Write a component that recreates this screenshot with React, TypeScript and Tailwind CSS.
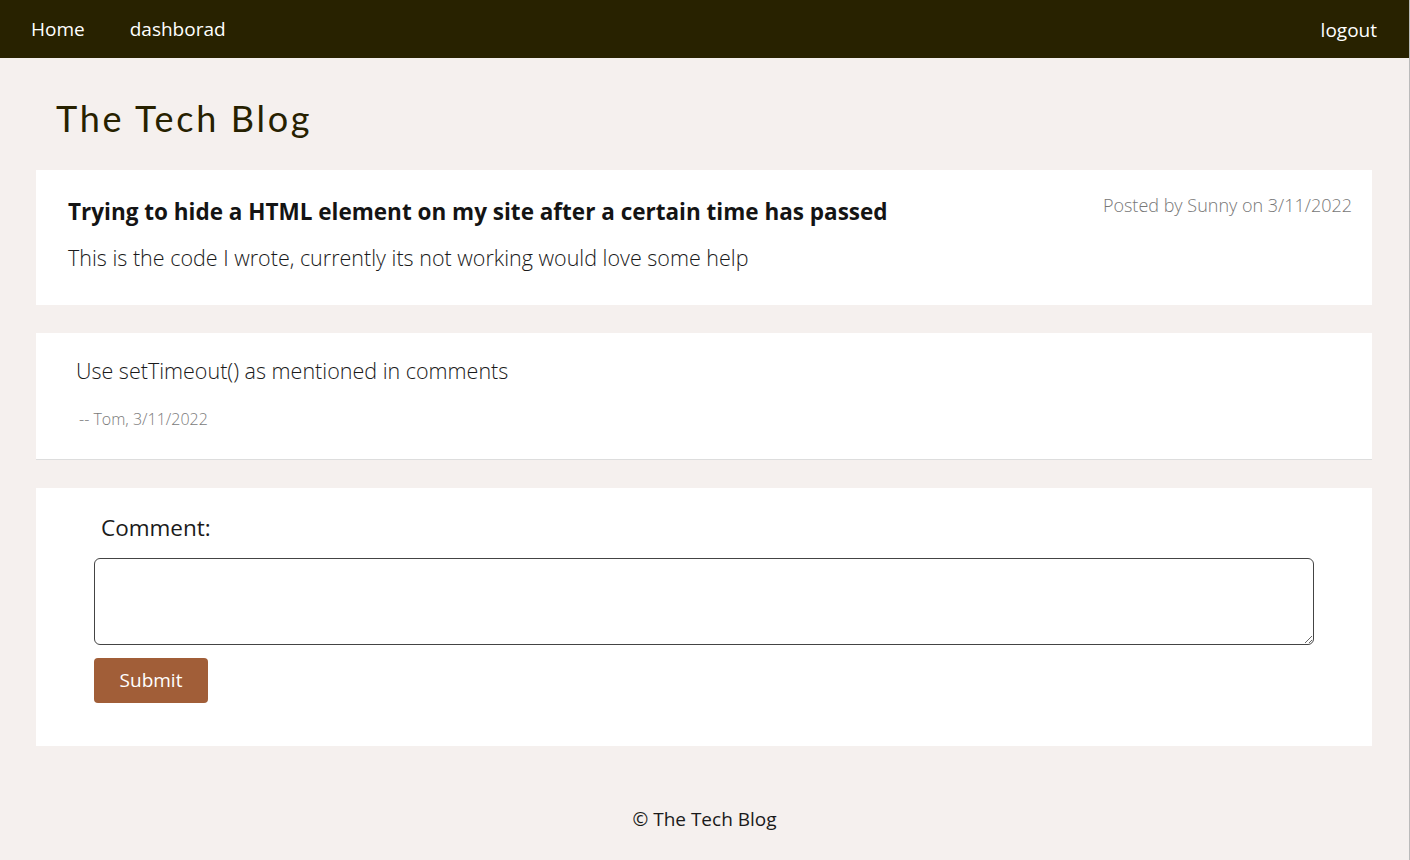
import React from 'react';

const font = { fontFamily: '"Open Sans", "Noto Sans", sans-serif' };

function NavBar() {
  return (
    <nav className="flex h-[58px] items-center justify-between bg-[#282200] pl-[31px] pr-[32px] text-[19px] text-white">
      <div className="flex items-center gap-[45px]">
        <a className="cursor-pointer">Home</a>
        <a className="cursor-pointer">dashborad</a>
      </div>
      <a className="cursor-pointer pt-[2px]">logout</a>
    </nav>
  );
}

function PostCard() {
  return (
    <section className="bg-white pb-[31px] pl-[32px] pr-[20px] pt-[25px]">
      <div className="flex items-start justify-between">
        <h2 className="text-[22.5px] font-bold text-[#141414]">
          Trying to hide a HTML element on my site after a certain time has passed
        </h2>
        <span className="mt-[-3px] text-[18px] font-light text-[#777]">Posted by Sunny on 3/11/2022</span>
      </div>
      <p className="mt-[13px] text-[21.5px] font-light text-[#1a1a1a]">
        This is the code I wrote, currently its not working would love some help
      </p>
    </section>
  );
}

function CommentItem() {
  return (
    <section className="border-b border-[#dddddd] bg-white pb-[28px] pl-[40px] pt-[22px]">
      <p className="text-[21.5px] font-light text-[#1a1a1a]">Use setTimeout() as mentioned in comments</p>
      <p className="mt-[20px] pl-[3px] text-[16px] font-light text-[#7a7a7a]">-- Tom, 3/11/2022</p>
    </section>
  );
}

function CommentForm() {
  return (
    <form className="bg-white pb-[43px] pl-[58px] pr-[58px] pt-[23px]" onSubmit={(e) => e.preventDefault()}>
      <label className="block pl-[7px] text-[22.5px] text-[#1a1a1a]">Comment:</label>
      <textarea className="mt-[13px] block h-[87px] w-full rounded-[6px] border border-[#444] bg-white" />
      <button
        type="submit"
        className="mt-[13px] h-[45px] w-[114px] rounded-[4px] bg-[#a15e38] text-[19px] text-white"
      >
        Submit
      </button>
    </form>
  );
}

export default function App() {
  return (
    <div className="min-h-[860px] border-r border-[#bbb] bg-[#f5f0ee]" style={font}>
      <NavBar />
      <header className="pb-[30px] pl-[56px] pt-[38px]">
        <h1
          className="text-[36px] leading-[44px] tracking-[2.7px] text-[#272100]"
          style={{ fontFamily: '"Lato", "Noto Sans", sans-serif' }}
        >
          The Tech Blog
        </h1>
      </header>
      <main className="ml-[36px] mr-[37px] flex flex-col gap-[28px]">
        <PostCard />
        <CommentItem />
        <CommentForm />
      </main>
      <footer className="pb-[26px] pt-[59px] text-center text-[19px] text-[#1a1a1a]">© The Tech Blog</footer>
    </div>
  );
}
